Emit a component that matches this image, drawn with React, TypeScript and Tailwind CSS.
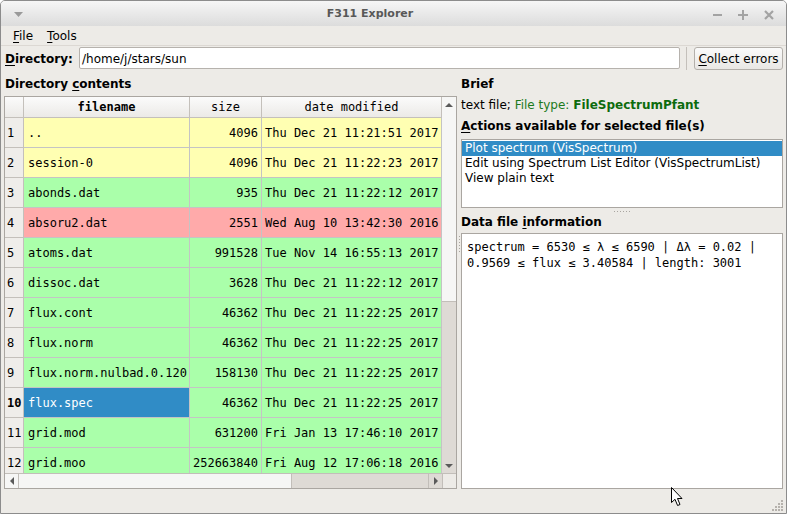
import React from 'react';

type Row = { n: number; name: string; size: string; date: string; color: string };

const YELLOW = 'bg-[#ffffb2]';
const GREEN = 'bg-[#aaffaa]';
const PINK = 'bg-[#ffaaaa]';

const rows: Row[] = [
  { n: 1, name: '..', size: '4096', date: 'Thu Dec 21 11:21:51 2017', color: YELLOW },
  { n: 2, name: 'session-0', size: '4096', date: 'Thu Dec 21 11:22:23 2017', color: YELLOW },
  { n: 3, name: 'abonds.dat', size: '935', date: 'Thu Dec 21 11:22:12 2017', color: GREEN },
  { n: 4, name: 'absoru2.dat', size: '2551', date: 'Wed Aug 10 13:42:30 2016', color: PINK },
  { n: 5, name: 'atoms.dat', size: '991528', date: 'Tue Nov 14 16:55:13 2017', color: GREEN },
  { n: 6, name: 'dissoc.dat', size: '3628', date: 'Thu Dec 21 11:22:12 2017', color: GREEN },
  { n: 7, name: 'flux.cont', size: '46362', date: 'Thu Dec 21 11:22:25 2017', color: GREEN },
  { n: 8, name: 'flux.norm', size: '46362', date: 'Thu Dec 21 11:22:25 2017', color: GREEN },
  { n: 9, name: 'flux.norm.nulbad.0.120', size: '158130', date: 'Thu Dec 21 11:22:25 2017', color: GREEN },
  { n: 10, name: 'flux.spec', size: '46362', date: 'Thu Dec 21 11:22:25 2017', color: GREEN },
  { n: 11, name: 'grid.mod', size: '631200', date: 'Fri Jan 13 17:46:10 2017', color: GREEN },
  { n: 12, name: 'grid.moo', size: '252663840', date: 'Fri Aug 12 17:06:18 2016', color: GREEN },
];

const SELECTED = 10;

const Arrow: React.FC<{ dir: 'up' | 'down' | 'left' | 'right' }> = ({ dir }) => {
  const pts = {
    up: '0,5 4,1 8,5',
    down: '0,1 4,5 8,1',
    left: '5,0 1,4 5,8',
    right: '1,0 5,4 1,8',
  }[dir];
  const vert = dir === 'up' || dir === 'down';
  return (
    <svg width={vert ? 8 : 6} height={vert ? 6 : 8} viewBox={vert ? '0 0 8 6' : '0 0 6 8'}>
      <polygon points={pts} fill="#5a5a5a" />
    </svg>
  );
};

const Dots: React.FC<{ vertical?: boolean }> = ({ vertical }) => (
  <div className={vertical ? 'flex flex-col gap-[2px]' : 'flex gap-[2px]'}>
    {[0, 1, 2, 3, 4, 5].map((i) => (
      <div key={i} className="w-[1px] h-[1px] bg-[#a9a5a0]" />
    ))}
  </div>
);

export default function App() {
  return (
    <div className="relative w-[787px] h-[514px] overflow-hidden rounded-t-[5px] border border-[#8c8c8c] bg-[#edebe7] text-[12px] text-black font-['DejaVu_Sans',sans-serif] flex flex-col">
      {/* title bar */}
      <div className="h-[25px] flex items-center pt-[2px] bg-linear-to-b from-[#f6f6f6] to-[#dcdcdc]">
        <div className="w-[35px] flex justify-center">
          <svg width="9" height="6" viewBox="0 0 9 6">
            <polygon points="0,0 9,0 4.5,5" fill="#9a9a9a" />
          </svg>
        </div>
        <div className="flex-1 text-center text-[11px] font-bold text-[#585858]">F311 Explorer</div>
        <div className="flex pr-[4px]">
          <div className="w-[26px] h-[23px] flex items-center justify-center">
            <div className="w-[9px] h-[2px] bg-[#a3a3a3]" />
          </div>
          <div className="w-[26px] h-[23px] flex items-center justify-center">
            <svg width="10" height="10" viewBox="0 0 10 10">
              <path d="M0 5h10M5 0v10" stroke="#a3a3a3" strokeWidth="2" />
            </svg>
          </div>
          <div className="w-[26px] h-[23px] flex items-center justify-center">
            <svg width="10" height="10" viewBox="0 0 10 10">
              <path d="M1 1l8 8M9 1l-8 8" stroke="#a3a3a3" strokeWidth="2.2" />
            </svg>
          </div>
        </div>
      </div>

      {/* menu bar */}
      <div className="h-[20px] flex items-center pl-[5px] border-b border-[#dcd8d3]">
        <span className="px-[7px]"><span className="underline underline-offset-2">F</span>ile</span>
        <span className="px-[7px]"><span className="underline underline-offset-2">T</span>ools</span>
      </div>

      {/* directory row */}
      <div className="h-[24px] flex items-start pt-[1px] pl-[4px]">
        <div className="w-[74px] h-[22px] flex items-center pt-[1px] font-bold">
          <span><span className="underline underline-offset-2">D</span>irectory:</span>
        </div>
        <div className="w-[601px] h-[22px] flex items-center pl-[2px] pt-[1px] bg-white border border-[#b6b2ad] rounded-[2px]">
          /home/j/stars/sun
        </div>
        <div className="ml-[6px] w-[1px] h-[23px] bg-[#c4c0bb]" />
        <div className="ml-[7px] w-[89px] h-[23px] flex items-center justify-center bg-linear-to-b from-[#fafafa] to-[#e9e7e4] border border-[#b3afaa] rounded-[3px]">
          <span><span className="underline underline-offset-2">C</span>ollect errors</span>
        </div>
      </div>

      {/* main area */}
      <div className="h-[419px] flex pl-[3px]">
        {/* left column */}
        <div className="w-[453px] flex flex-col">
          <div className="h-[26px] flex items-end pb-[3px] pl-[1px] font-bold">
            <span>Directory <span className="underline underline-offset-2">c</span>ontents</span>
          </div>
          <div className="h-[393px] border border-[#aaa6a1] bg-white flex flex-col font-['DejaVu_Sans_Mono',monospace]">
            <div className="h-[376px] flex">
              <div className="w-[437px] flex flex-col">
                {/* header */}
                <div className="h-[21px] flex bg-linear-to-b from-[#fbfbfb] to-[#ebe9e6]">
                  <div className="w-[19px] border-r border-b border-[#c4c0bb]" />
                  <div className="w-[166px] flex items-center justify-center font-bold border-r border-b border-[#c4c0bb]">filename</div>
                  <div className="w-[72px] flex items-center justify-center border-r border-b border-[#c4c0bb]">size</div>
                  <div className="w-[180px] flex items-center justify-center border-r border-b border-[#c4c0bb]">date modified</div>
                </div>
                {/* body */}
                <div className="h-[355px] overflow-hidden">
                  {rows.map((r) => (
                    <div key={r.n} className="h-[30px] flex">
                      <div className={`w-[19px] shrink-0 flex items-center pl-[2px] bg-[#efedea] border-r border-b border-[#c4c0bb] ${r.n === SELECTED ? 'font-bold' : ''}`}>
                        {r.n}
                      </div>
                      <div className={`w-[166px] shrink-0 flex items-center pl-[4px] whitespace-nowrap overflow-hidden border-r border-b border-[#c4c4c4] ${r.n === SELECTED ? 'bg-[#308cc6] text-white' : r.color}`}>
                        {r.name}
                      </div>
                      <div className={`w-[72px] shrink-0 flex items-center justify-end pr-[3px] border-r border-b border-[#c4c4c4] ${r.color}`}>
                        {r.size}
                      </div>
                      <div className={`w-[180px] shrink-0 flex items-center pl-[3px] whitespace-nowrap border-r border-b border-[#c4c4c4] ${r.color}`}>
                        {r.date}
                      </div>
                    </div>
                  ))}
                </div>
              </div>
              {/* vertical scrollbar */}
              <div className="w-[14px] flex flex-col bg-[#dedad5]">
                <div className="h-[15px] flex items-center justify-center bg-[#f6f6f5]">
                  <Arrow dir="up" />
                </div>
                <div className="h-[190px] bg-[#f6f6f5] border-b border-[#c2beb9]" />
                <div className="flex-1" />
                <div className="h-[15px] flex items-center justify-center">
                  <Arrow dir="down" />
                </div>
              </div>
            </div>
            {/* horizontal scrollbar */}
            <div className="h-[15px] flex border-t border-[#c2beb9]">
              <div className="w-[437px] flex bg-[#dedad5]">
                <div className="w-[14px] flex items-center justify-center bg-[#f6f6f5] border-r border-[#c2beb9]">
                  <Arrow dir="left" />
                </div>
                <div className="w-[273px] bg-[#f6f6f5] border-r border-[#c2beb9]" />
                <div className="flex-1" />
                <div className="w-[14px] flex items-center justify-center border-l border-[#c2beb9]">
                  <Arrow dir="right" />
                </div>
              </div>
              <div className="w-[14px] bg-[#edebe7] border-l border-[#c2beb9]" />
            </div>
          </div>
        </div>

        {/* splitter */}
        <div className="w-[4px] flex items-center justify-center pb-[72px]">
          <Dots vertical />
        </div>

        {/* right column */}
        <div className="w-[322px] flex flex-col">
          <div className="h-[27px] flex items-end pb-[4px] font-bold">Brief</div>
          <div className="h-[16px] flex items-center whitespace-nowrap">
            <span>text file;&nbsp;</span>
            <span className="text-[#1c7a1c]">File type:&nbsp;</span>
            <span className="font-bold text-[#0d6b0d]">FileSpectrumPfant</span>
          </div>
          <div className="h-[26px] flex items-center font-bold">
            <span><span className="underline underline-offset-2">A</span>ctions available for selected file(s)</span>
          </div>
          <div className="h-[69px] bg-white border border-[#aaa6a1] pt-[1px]">
            <div className="h-[15px] leading-[15px] pl-[3px] bg-[#308cc6] text-white">Plot spectrum (VisSpectrum)</div>
            <div className="h-[15px] leading-[15px] pl-[3px]">Edit using Spectrum List Editor (VisSpectrumList)</div>
            <div className="h-[15px] leading-[15px] pl-[3px]">View plain text</div>
          </div>
          <div className="h-[6px] flex items-center justify-center">
            <Dots />
          </div>
          <div className="h-[19px] flex items-center pb-[3px] font-bold">
            <span>Data file <span className="underline underline-offset-2">i</span>nformation</span>
          </div>
          <div className="h-[256px] bg-white border border-[#aaa6a1] pl-[5px] pt-[5px] leading-[16px] whitespace-pre font-['DejaVu_Sans_Mono',monospace]">
            <div>spectrum = 6530 ≤ λ ≤ 6590 | Δλ = 0.02 |</div>
            <div>0.9569 ≤ flux ≤ 3.40584 | length: 3001</div>
          </div>
        </div>
      </div>

      {/* status bar */}
      <div className="h-[24px] flex justify-end items-end pr-[2px] pb-[1px]">
        <svg width="12" height="12" viewBox="0 0 12 12">
          {[
            [9, 0], [9, 3], [6, 3], [9, 6], [6, 6], [3, 6], [9, 9], [6, 9], [3, 9], [0, 9],
          ].map(([x, y], i) => (
            <rect key={i} x={x} y={y} width="2" height="2" fill="#b5b1ac" />
          ))}
        </svg>
      </div>

      {/* mouse cursor */}
      <svg className="absolute left-[670px] top-[486px]" width="13" height="20" viewBox="0 0 13 20">
        <path d="M0.5 0.5 L0.5 15.5 L4 12.3 L6.6 18.5 L9 17.5 L6.5 11.5 L11 11.5 Z" fill="#fff" stroke="#000" strokeWidth="1" strokeLinejoin="round" />
      </svg>
    </div>
  );
}
